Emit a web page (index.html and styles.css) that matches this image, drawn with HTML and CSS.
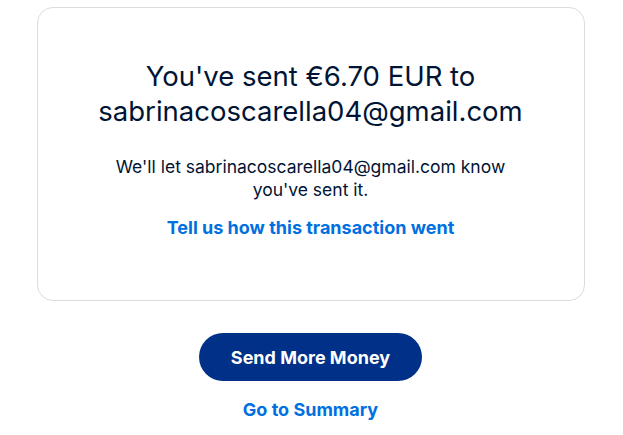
FILE: index.html
```html
<!DOCTYPE html>
<html lang="en">
<head>
<meta charset="utf-8">
<title>Sent</title>
<link rel="stylesheet" href="styles.css">
</head>
<body>
<main class="page">
  <section class="card">
    <h1 class="title">You've sent €6.70 EUR to sabrinacoscarella04@gmail.com</h1>
    <p class="note">We'll let sabrinacoscarella04@gmail.com know you've sent it.</p>
    <a class="link feedback" href="#">Tell us how this transaction went</a>
  </section>
  <div class="actions">
    <a class="btn" href="#">Send More Money</a>
    <a class="link summary" href="#">Go to Summary</a>
  </div>
</main>
</body>
</html>
```

FILE: styles.css
```css
html, body {
  margin: 0;
  padding: 0;
  background: #ffffff;
}
body {
  font-family: Inter, "Noto Sans", Arial, sans-serif;
  color: #001435;
}
.page {
  width: 548px;
  margin: 0 auto;
  padding-top: 7px;
  transform: translateX(-1px);
}
.card {
  border: 1px solid #dcdcdc;
  border-radius: 16px;
  height: 294px;
  box-sizing: border-box;
  padding: 51px 30px 0;
  display: flex;
  flex-direction: column;
  align-items: center;
  text-align: center;
}
.title {
  margin: 0;
  font-size: 27.5px;
  font-weight: 400;
  line-height: 35px;
  max-width: 470px;
}
.note {
  margin: 26px 0 0;
  font-size: 17.5px;
  line-height: 23px;
  max-width: 420px;
}
.link {
  color: #0070e0;
  font-weight: 700;
  text-decoration: none;
  font-size: 18px;
}
.feedback {
  margin-top: 15px;
  line-height: 24px;
}
.actions {
  display: flex;
  flex-direction: column;
  align-items: center;
  padding-top: 32px;
}
.btn {
  display: flex;
  align-items: center;
  justify-content: center;
  width: 223px;
  height: 48px;
  border-radius: 24px;
  background: #003087;
  color: #ffffff;
  font-weight: 700;
  font-size: 18px;
  text-decoration: none;
}
.summary {
  margin-top: 17px;
  line-height: 24px;
}
```
